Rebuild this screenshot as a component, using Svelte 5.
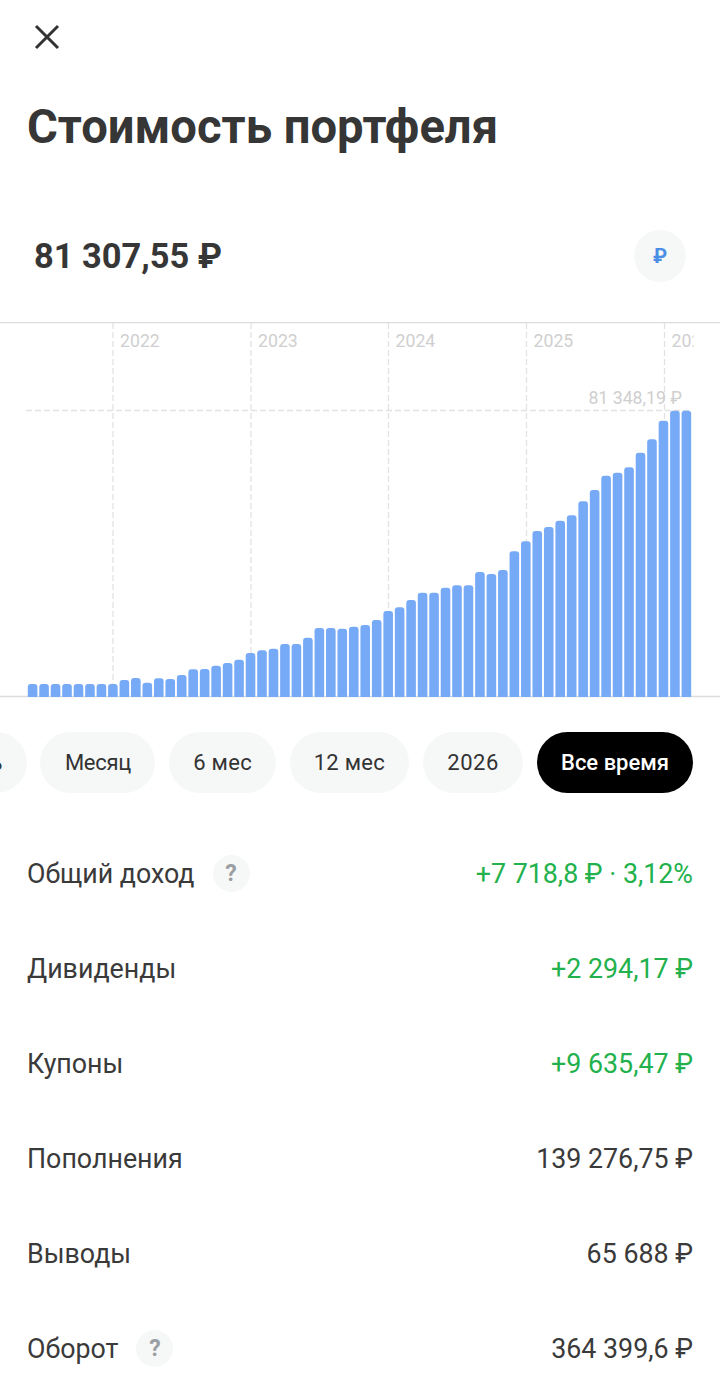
<script>
  const baseY = 375;
  const top0 = 322;
  const tops = [684,684,684,684,684,684,684,684,680,678,682.7,678.3,679,675,669.3,669,665.7,663,659.7,653,650.3,648.7,644,644,637.7,628,628,628.7,626.7,625,620,611,607.3,600,592.7,592.7,587.7,585.3,585.3,572,574,570,551.3,541.3,531,527,520.7,515.3,501.3,490,475.7,472.7,467.3,452.7,439.3,420.7,410.7,410.7];
  const bars = tops.map((t, i) => {
    const x = 27.8 + i * 11.47;
    const y = t - top0;
    const w = 9.6;
    const r = 3;
    return `M${x} ${baseY}V${y + r}Q${x} ${y} ${x + r} ${y}H${x + w - r}Q${x + w} ${y} ${x + w} ${y + r}V${baseY}Z`;
  });
  const years = [
    { x: 113, label: '2022' },
    { x: 251, label: '2023' },
    { x: 388.5, label: '2024' },
    { x: 526.5, label: '2025' },
    { x: 664.5, label: '2026' }
  ];
  const pills = [
    { label: 'День' },
    { label: 'Месяц', cls: 'narrow' },
    { label: '6 мес' },
    { label: '12 мес' },
    { label: '2026', cls: 'wide' },
    { label: 'Все время', cls: 'active' }
  ];
  const rows = [
    { label: 'Общий доход', value: '+7 718,8 ₽ · 3,12%', help: true, green: true },
    { label: 'Дивиденды', value: '+2 294,17 ₽', green: true },
    { label: 'Купоны', value: '+9 635,47 ₽', green: true },
    { label: 'Пополнения', value: '139 276,75 ₽' },
    { label: 'Выводы', value: '65 688 ₽' },
    { label: 'Оборот', value: '364 399,6 ₽', help: true }
  ];
</script>

<div class="page">
  <header class="top">
    <button class="close" aria-label="Закрыть">
      <svg width="28" height="28" viewBox="0 0 28 28"><path d="M3 3L25 25M25 3L3 25" fill="none" stroke="#333" stroke-width="3"/></svg>
    </button>
    <h1>Стоимость портфеля</h1>
    <div class="amount">
      <span>81 307,55 ₽</span>
      <span class="currency">₽</span>
    </div>
  </header>

  <svg class="chart" width="720" height="376" viewBox="0 0 720 376">
    <defs>
      <clipPath id="plot"><rect x="0" y="0" width="693.5" height="376"/></clipPath>
    </defs>
    <line x1="0" x2="720" y1="0.5" y2="0.5" class="axis"/>
    <line x1="0" x2="720" y1="374.5" y2="374.5" class="axis"/>
    <line x1="26" x2="692" y1="88.5" y2="88.5" class="grid"/>
    <g clip-path="url(#plot)">
      {#each years as y}
        <line x1={y.x} x2={y.x} y1="1" y2="375" class="grid"/>
        <text x={y.x + 7} y="24.5" class="year">{y.label}</text>
      {/each}
    </g>
    <text x="682" y="81.5" text-anchor="end" class="year">81 348,19 ₽</text>
    {#each bars as d}
      <path {d} fill="#77aaf6"/>
    {/each}
  </svg>

  <nav class="pills">
    {#each pills as p}
      <span class="pill {p.cls ?? ''}">{p.label}</span>
    {/each}
  </nav>

  <section class="rows">
    {#each rows as r}
      <div class="row">
        <div class="label">
          <span>{r.label}</span>
          {#if r.help}<span class="help">?</span>{/if}
        </div>
        <span class="value" class:green={r.green}>{r.value}</span>
      </div>
    {/each}
  </section>
</div>

<style>
  :global(body) {
    margin: 0;
    background: #fff;
  }
  .page {
    width: 720px;
    height: 1386px;
    overflow: hidden;
    font-family: Roboto, "Liberation Sans", sans-serif;
    color: #333;
  }
  .top {
    padding: 23px 34px 0 27px;
    height: 299px;
    box-sizing: border-box;
    display: flex;
    flex-direction: column;
  }
  .close {
    width: 28px;
    height: 28px;
    padding: 0;
    margin-left: 6px;
    border: 0;
    background: none;
    display: block;
  }
  .close svg {
    display: block;
  }
  h1 {
    margin: 45px 0 0;
    font-size: 47.2px;
    line-height: 62px;
    font-weight: 700;
    color: #363636;
  }
  .amount {
    margin: 72px 0 0 7px;
    display: flex;
    justify-content: space-between;
    align-items: center;
    font-size: 34.4px;
    font-weight: 700;
    height: 52px;
    color: #363636;
  }
  .currency {
    width: 52px;
    height: 52px;
    border-radius: 50%;
    background: #f6f8f8;
    color: #4a8ee6;
    font-size: 20px;
    display: flex;
    align-items: center;
    justify-content: center;
  }
  .chart {
    display: block;
    margin-top: 23px;
  }
  .axis {
    stroke: #dcdcdc;
    stroke-width: 1.5;
  }
  .grid {
    stroke: #e2e2e2;
    stroke-width: 1.3;
    stroke-dasharray: 6 3;
  }
  .year {
    font-size: 17.7px;
    fill: #cfcfcf;
  }
  .pills {
    margin-top: 34px;
    padding-right: 27px;
    display: flex;
    justify-content: flex-end;
    gap: 13.7px;
    overflow: hidden;
  }
  .pill {
    flex: none;
    height: 61px;
    padding: 0 24px;
    border-radius: 31px;
    background: #f6f8f8;
    display: flex;
    align-items: center;
    font-size: 22px;
    font-weight: 400;
    letter-spacing: 0.3px;
    color: #333;
  }
  .pill.narrow {
    letter-spacing: -0.3px;
    padding: 0 24.5px;
  }
  .pill.wide {
    letter-spacing: 0.5px;
    padding: 0 24.5px;
  }
  .pill.active {
    background: #000;
    color: #fff;
    font-weight: 500;
    letter-spacing: 0;
  }
  .rows {
    margin-top: 33px;
    padding: 0 27px 0 27px;
  }
  .row {
    height: 95px;
    display: flex;
    align-items: center;
    justify-content: space-between;
    font-size: 26.8px;
    color: #3a3a3a;
  }
  .label {
    display: flex;
    align-items: center;
    gap: 18px;
  }
  .help {
    width: 37px;
    height: 37px;
    border-radius: 50%;
    background: #f6f8f8;
    color: #9a9ea3;
    font-size: 23px;
    font-weight: 700;
    display: flex;
    align-items: center;
    justify-content: center;
  }
  .value.green {
    color: #22b14c;
  }
</style>
